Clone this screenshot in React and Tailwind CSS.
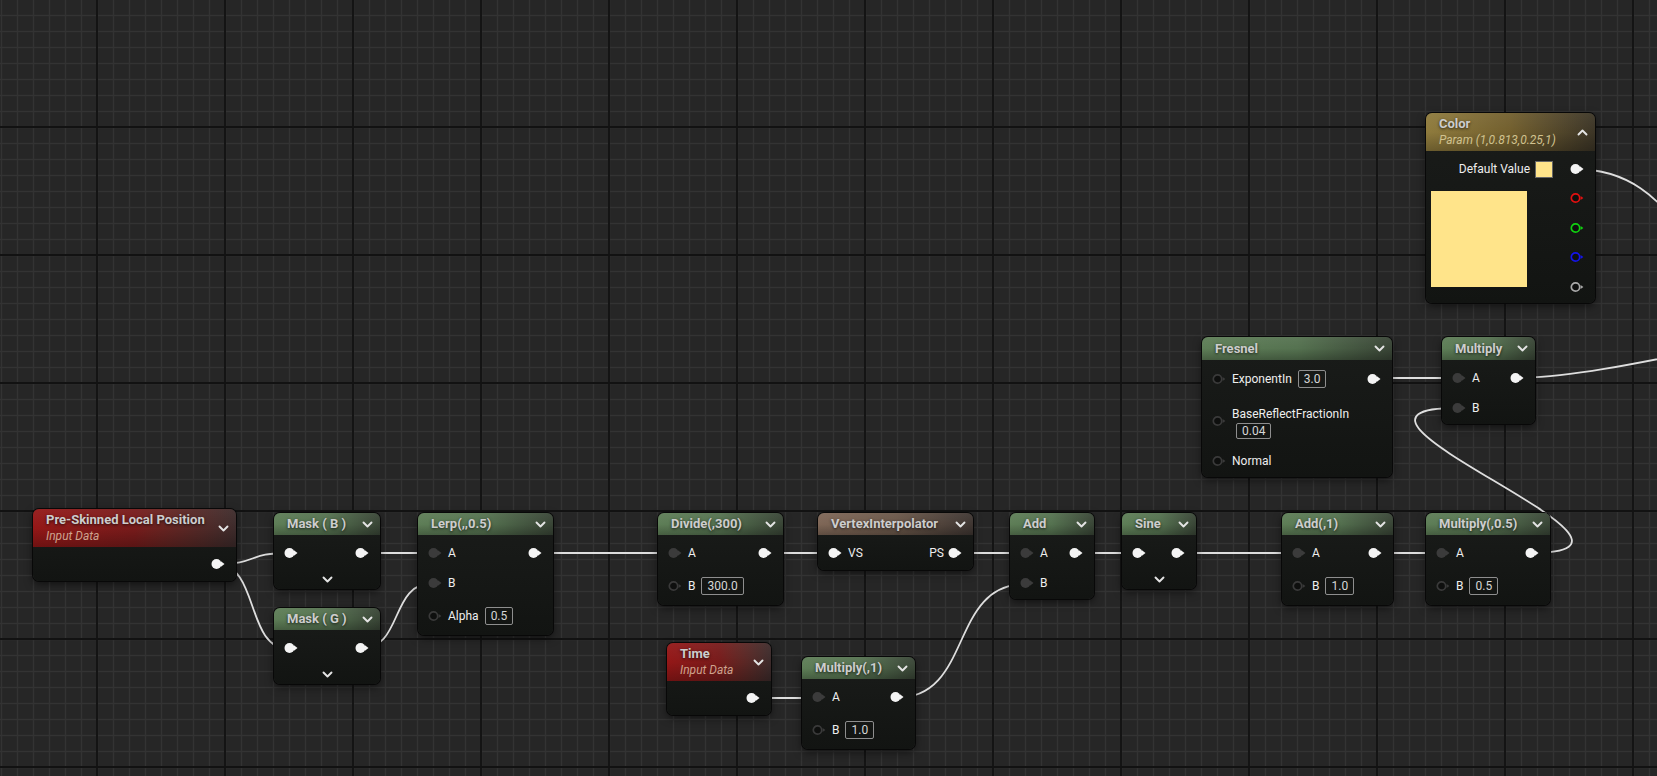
import React from 'react'

// header colour sets for node types
const HEAD = {
  green: 'bg-linear-to-r from-[#5e7e57] via-[#557250] to-[#394536]',
  red: 'bg-linear-to-r from-[#941717] via-[#771b1b] to-[#3d2b2b]',
  gold: 'bg-linear-to-r from-[#8f7b3d] via-[#725f2e] to-[#3c3526]',
  brown: 'bg-linear-to-r from-[#7f6757] via-[#6b584a] to-[#3f3632]',
}

const SUB = {
  red: 'text-[#cfa38e]',
  gold: 'text-[#d0c28f]',
}

function Pin({ kind = 'on', color }) {
  if (kind === 'on' || kind === 'dim') {
    const c = kind === 'on' ? '#f4f4f4' : '#3b3b3b'
    return (
      <svg width="14" height="12" viewBox="0 0 14 12" className="shrink-0">
        <circle cx="5.5" cy="6" r="5" fill={c} />
        <path d="M10 3.3 L13.5 6 L10 8.7 Z" fill={c} />
      </svg>
    )
  }
  const c = color || '#3a3a3a'
  return (
    <svg width="14" height="12" viewBox="0 0 14 12" className="shrink-0">
      <circle cx="5.5" cy="6" r="4.2" fill="#0e0f0e" stroke={c} strokeWidth="1.7" />
      <path d="M10.6 4 L13.4 6 L10.6 8 Z" fill={c} />
    </svg>
  )
}

function Chevron({ up }) {
  return (
    <svg width="11" height="7" viewBox="0 0 11 7" className="shrink-0">
      <path
        d={up ? 'M1.5 5.5 L5.5 1.5 L9.5 5.5' : 'M1.5 1.5 L5.5 5.5 L9.5 1.5'}
        fill="none"
        stroke="#e4e4e4"
        strokeWidth="1.9"
        strokeLinecap="round"
        strokeLinejoin="round"
      />
    </svg>
  )
}

function ValueBox({ v }) {
  return (
    <span className="ml-[6px] h-[18px] px-[5px] border border-[#8e8e8e] rounded-[2px] text-[12px] leading-[16px] text-[#d6d6d6]">
      {v}
    </span>
  )
}

function InRow({ kind = 'dim', label, value, tall }) {
  return (
    <div className={`flex items-center pl-[10px] ${tall ? 'h-[28px]' : 'h-[22px]'}`}>
      <Pin kind={kind} />
      {label && <span className="ml-[6px] text-[12px] text-[#eeeeee]">{label}</span>}
      {value && <ValueBox v={value} />}
    </div>
  )
}

function OutPin() {
  return (
    <div className="flex items-center h-[22px] pr-[11px]">
      <Pin kind="on" />
    </div>
  )
}

function Node({ pos, header = 'green', title, subtitle, up, hh = 'h-[22px]', children }) {
  return (
    <div
      className={`absolute ${pos} rounded-[6px] overflow-hidden bg-linear-to-b from-[#1a1c1a] to-[#121412] shadow-[0_0_0_1px_#080808,0_3px_8px_rgba(0,0,0,0.55)]`}
    >
      <div
        className={`relative flex items-center justify-between pl-[13px] pr-[7px] ${HEAD[header]} ${subtitle ? 'h-[38px]' : hh}`}
      >
        <div className="absolute inset-0 bg-linear-to-b from-white/5 via-transparent to-black/25" />
        <div className="relative flex flex-col">
          <span className="text-[13px] leading-[16px] font-bold text-[#cdcdcd] whitespace-nowrap [text-shadow:0_1px_3px_rgba(0,0,0,0.7)]">
            {title}
          </span>
          {subtitle && (
            <span className={`text-[12px] leading-[16px] italic whitespace-nowrap ${SUB[header]}`}>{subtitle}</span>
          )}
        </div>
        <div className="relative">
          <Chevron up={up} />
        </div>
      </div>
      {children}
    </div>
  )
}

// standard body: inputs on the left, one output on the right
function Body({ children, out = true }) {
  return (
    <div className="flex justify-between items-start pt-[7px] pb-[5px]">
      <div className="flex flex-col gap-2">{children}</div>
      {out && <OutPin />}
    </div>
  )
}

function MaskBody() {
  return (
    <div className="pt-[7px] pb-[3px]">
      <div className="flex items-center justify-between h-[22px] pl-[10px] pr-[11px]">
        <Pin kind="on" />
        <Pin kind="on" />
      </div>
      <div className="flex justify-center items-center h-[14px] mt-2">
        <Chevron />
      </div>
    </div>
  )
}

const wire = (x1, y1, x2, y2, t) => {
  const k = t ?? Math.max(Math.abs(x2 - x1) * 0.6, 20)
  return `M${x1} ${y1} C${x1 + k} ${y1} ${x2 - k} ${y2} ${x2} ${y2}`
}

const WIRES = [
  wire(216, 564, 289, 553),
  wire(216, 564, 289, 649),
  wire(360, 553, 433, 553),
  wire(360, 649, 433, 583),
  wire(533, 553, 673, 553),
  wire(763, 553, 833, 553),
  wire(953, 553, 1026, 553),
  wire(752, 698, 818, 698),
  wire(896, 698, 1026, 584, 78),
  wire(1074, 553, 1137, 553),
  wire(1177, 553, 1297, 553),
  wire(1373, 553, 1442, 553),
  wire(1530, 553, 1457, 408, 170),
  wire(1372, 378, 1457, 378),
  'M1516 378 C1616 378 1800 320 1900 320',
  'M1575 169 C1790 169 1700 650 1950 650',
]

function Grid() {
  const minorX = []
  for (let x = 1.5; x < 1657; x += 16) minorX.push(x)
  const minorY = []
  for (let y = 15.5; y < 776; y += 16) minorY.push(y)
  const majorX = []
  for (let x = 97; x < 1657; x += 128) majorX.push(x)
  const majorY = []
  for (let y = 127; y < 776; y += 128) majorY.push(y)
  return (
    <svg className="absolute inset-0" width="1657" height="776">
      {minorX.map((x) => (
        <line key={'vx' + x} x1={x} y1="0" x2={x} y2="776" stroke="#333333" strokeWidth="1.4" />
      ))}
      {minorY.map((y) => (
        <line key={'hy' + y} x1="0" y1={y} x2="1657" y2={y} stroke="#333333" strokeWidth="1.4" />
      ))}
      {majorX.map((x) => (
        <line key={'mx' + x} x1={x} y1="0" x2={x} y2="776" stroke="#141414" strokeWidth="2" />
      ))}
      {majorY.map((y) => (
        <line key={'my' + y} x1="0" y1={y} x2="1657" y2={y} stroke="#121212" strokeWidth="2" />
      ))}
    </svg>
  )
}

export default function App() {
  return (
    <div className="relative w-[1657px] h-[776px] overflow-hidden bg-[#262626] font-['Roboto','Noto_Sans',sans-serif]">
      <Grid />

      <svg className="absolute inset-0" width="1657" height="776">
        {WIRES.map((d, i) => (
          <path key={i} d={d} fill="none" stroke="#dedede" strokeWidth="1.8" />
        ))}
      </svg>

      {/* Color parameter */}
      <Node pos="left-[1426px] top-[113px] w-[169px]" header="gold" title="Color" subtitle="Param (1,0.813,0.25,1)" up>
        <div className="pt-[7px] pb-[5px]">
          <div className="flex items-center justify-end h-[22px] pr-[11px]">
            <span className="text-[12px] text-[#eeeeee]">Default Value</span>
            <span className="ml-[5px] w-[18px] h-[17px] bg-[#ffe48a] border border-[#666666]" />
            <span className="ml-[17px] flex">
              <Pin kind="on" />
            </span>
          </div>
          <div className="flex justify-between items-start mt-[7px] pl-[5px] pr-[11px]">
            <div className="mt-[4px] w-[96px] h-[96px] bg-[#ffe48a]" />
            <div className="flex flex-col gap-[7.5px]">
              <div className="flex items-center h-[22px]"><Pin kind="off" color="#e01010" /></div>
              <div className="flex items-center h-[22px]"><Pin kind="off" color="#10d010" /></div>
              <div className="flex items-center h-[22px]"><Pin kind="off" color="#1414e6" /></div>
              <div className="flex items-center h-[22px]"><Pin kind="off" color="#a8a8a8" /></div>
            </div>
          </div>
        </div>
      </Node>

      {/* Fresnel */}
      <Node pos="left-[1202px] top-[337px] w-[190px]" title="Fresnel" hh="h-[23px]">
        <div className="flex justify-between items-start pt-[7px] pb-[5px]">
          <div className="flex flex-col gap-[7px]">
            <div className="flex items-center pl-[10px] h-[24px]">
              <Pin kind="off" />
              <span className="ml-[6px] text-[12px] text-[#eeeeee]">ExponentIn</span>
              <ValueBox v="3.0" />
            </div>
            <div className="flex items-center pl-[10px] h-[45px]">
              <Pin kind="off" />
              <div className="ml-[6px] flex flex-col items-start pt-[6px]">
                <span className="text-[12px] leading-[16px] text-[#eeeeee]">BaseReflectFractionIn</span>
                <span className="mt-[-4px] ml-[-2px]">
                  <ValueBox v="0.04" />
                </span>
              </div>
            </div>
            <InRow kind="off" label="Normal" />
          </div>
          <div className="flex items-center h-[24px] pr-[11px]">
            <Pin kind="on" />
          </div>
        </div>
      </Node>

      {/* Multiply */}
      <Node pos="left-[1442px] top-[337px] w-[93px]" title="Multiply" hh="h-[23px]">
        <Body>
          <InRow label="A" />
          <InRow label="B" />
        </Body>
      </Node>

      {/* Pre-Skinned Local Position */}
      <Node pos="left-[33px] top-[509px] w-[203px]" header="red" title="Pre-Skinned Local Position" subtitle="Input Data">
        <div className="flex justify-end pt-[6px] pb-[6px]">
          <OutPin />
        </div>
      </Node>

      <Node pos="left-[274px] top-[513px] w-[106px]" title="Mask ( B )">
        <MaskBody />
      </Node>

      <Node pos="left-[274px] top-[608px] w-[106px]" title="Mask ( G )">
        <MaskBody />
      </Node>

      <Node pos="left-[418px] top-[513px] w-[135px]" title="Lerp(,,0.5)">
        <Body>
          <InRow label="A" />
          <InRow label="B" />
          <InRow kind="off" label="Alpha" value="0.5" tall />
        </Body>
      </Node>

      <Node pos="left-[658px] top-[513px] w-[125px]" title="Divide(,300)">
        <Body>
          <InRow label="A" />
          <InRow kind="off" label="B" value="300.0" tall />
        </Body>
      </Node>

      <Node pos="left-[818px] top-[513px] w-[155px]" header="brown" title="VertexInterpolator">
        <div className="flex justify-between items-center h-[22px] mt-[7px] mb-[6px] pl-[10px] pr-[11px]">
          <div className="flex items-center">
            <Pin kind="on" />
            <span className="ml-[6px] text-[12px] text-[#eeeeee]">VS</span>
          </div>
          <div className="flex items-center">
            <span className="mr-[4px] text-[12px] text-[#eeeeee]">PS</span>
            <Pin kind="on" />
          </div>
        </div>
      </Node>

      <Node pos="left-[1010px] top-[513px] w-[84px]" title="Add">
        <Body>
          <InRow label="A" />
          <InRow label="B" />
        </Body>
      </Node>

      <Node pos="left-[1122px] top-[513px] w-[74px]" title="Sine">
        <MaskBody />
      </Node>

      <Node pos="left-[1282px] top-[513px] w-[111px]" title="Add(,1)">
        <Body>
          <InRow label="A" />
          <InRow kind="off" label="B" value="1.0" tall />
        </Body>
      </Node>

      <Node pos="left-[1426px] top-[513px] w-[124px]" title="Multiply(,0.5)">
        <Body>
          <InRow label="A" />
          <InRow kind="off" label="B" value="0.5" tall />
        </Body>
      </Node>

      {/* Time */}
      <Node pos="left-[667px] top-[643px] w-[104px]" header="red" title="Time" subtitle="Input Data">
        <div className="flex justify-end pt-[6px] pb-[6px]">
          <OutPin />
        </div>
      </Node>

      <Node pos="left-[802px] top-[657px] w-[113px]" title="Multiply(,1)">
        <Body>
          <InRow label="A" />
          <InRow kind="off" label="B" value="1.0" tall />
        </Body>
      </Node>
    </div>
  )
}
